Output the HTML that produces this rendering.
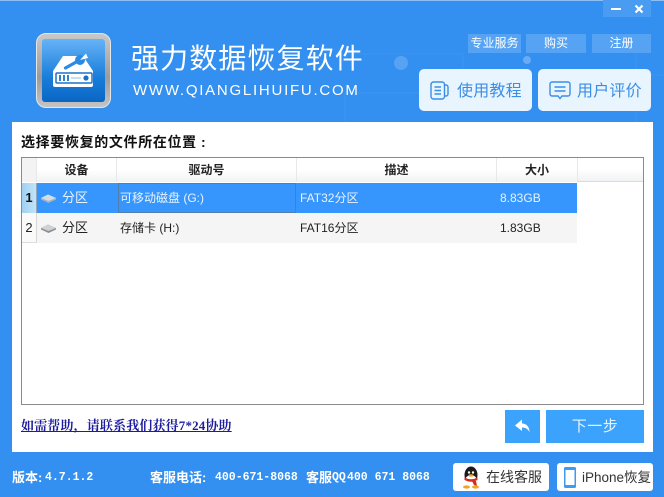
<!DOCTYPE html>
<html lang="zh-CN">
<head>
<meta charset="utf-8">
<title>强力数据恢复软件</title>
<style>
html,body{margin:0;padding:0}
body{width:664px;height:497px;overflow:hidden;position:relative;background:#338ff0;font-family:"Liberation Sans","Noto Sans CJK SC",sans-serif;color:#222}
div,span,a,svg{position:absolute;display:block;box-sizing:border-box;white-space:nowrap}
.top{background:#56a3f4;color:#fff;font-size:12px;line-height:19px;text-align:center;height:19px;top:34px}
.big{background:#e8f4fe;border-radius:5px;top:69px;height:42px;width:113px;color:#3b8ee6;font-size:16px;line-height:42px}
.hd{top:158px;height:24px;font-size:12px;font-weight:700;line-height:25px;text-align:center;color:#222;border-right:1px solid #e8e8e8;background:linear-gradient(#fff 0,#fff 50%,#f1f2f3 100%)}
.cell{font-size:12px;line-height:30px;height:30px}
.w{color:#e8f3ff}
.cj{color:#fff;font-weight:700;font-size:13px;line-height:14px;top:471px}
.num{color:#fff;font-weight:700;font-size:11.5px;line-height:14px;top:471px;font-family:"Liberation Mono",monospace}
.fb{background:#fff;border-radius:3px;top:463px;height:28px;width:96px;font-size:14px;line-height:29px;color:#333}
</style>
</head>
<body>
<div style="left:0;top:0;width:664px;height:1px;background:#8fc0f5"></div>

<!-- background decoration -->
<svg style="left:340px;top:40px" width="324" height="82" viewBox="0 0 324 82" fill="none" stroke="#3c95f1" stroke-width="1">
<path d="M0 14H123M123 14V29M5 53H80M5 53V82M296 14V82M296 35H324"/>
<circle cx="61" cy="23" r="7" fill="#57a2f2" stroke="none"/>
<circle cx="187" cy="20" r="4" fill="#6aacf4" stroke="none"/>
</svg>

<!-- window buttons -->
<div style="left:603px;top:0;width:48px;height:17px;background:#4a9cf2"></div>
<div style="left:611px;top:8px;width:10px;height:2px;background:#fff"></div>
<svg style="left:634px;top:4px" width="10" height="10" viewBox="0 0 10 10"><path d="M1.5 1.5L8.5 8.5M8.5 1.5L1.5 8.5" stroke="#fff" stroke-width="2.2"/></svg>

<!-- logo -->
<div style="left:36px;top:33px;width:75px;height:75px;border-radius:10px;background:linear-gradient(#c9c9c9,#9b9b9b 60%,#c4c4c4);border:1px solid #e6e6e6"></div>
<div style="left:42px;top:39px;width:63px;height:63px;border-radius:3px;background:linear-gradient(#66b3f6,#1a7edb 60%,#0a66c4)"></div>
<svg style="left:50px;top:50px" width="48" height="42" viewBox="0 0 48 42">
<path d="M13 6H33L43 21V35a2 2 0 0 1-2 2H5a2 2 0 0 1-2-2V21Z" fill="#fff"/>
<path d="M15.500 18L28 11" stroke="#2a8be6" stroke-width="3.200" stroke-linecap="round"/>
<circle cx="30" cy="10" r="5" fill="#2a8be6"/>
<path d="M30 10L36 3.500 38 8Z" fill="#fff"/>
<rect x="6" y="23" width="36" height="10" rx="1" fill="#fff" stroke="#1a72c8" stroke-width="1.500"/>
<path d="M10 25v6M14 25v6M18 25v6" stroke="#1a72c8" stroke-width="1.800"/>
<circle cx="36" cy="28" r="2.600" fill="#1a72c8"/>
<path d="M21 28H31" stroke="#8fbde8" stroke-width="1"/>
</svg>

<!-- title -->
<div style="left:131px;top:41px;font-size:28px;line-height:36px;letter-spacing:1.1px;color:#fff">强力数据恢复软件</div>
<div style="left:133px;top:82px;font-size:15px;line-height:18px;letter-spacing:1.75px;color:#fff">WWW.QIANGLIHUIFU.COM</div>

<!-- top links -->
<div class="top" style="left:468px;width:53px">专业服务</div>
<div class="top" style="left:526px;width:60px">购买</div>
<div class="top" style="left:592px;width:59px">注册</div>

<div class="big" style="left:419px"><span style="left:38px;top:2px;letter-spacing:.2px">使用教程</span>
<svg style="left:11px;top:12px" width="19" height="19" viewBox="0 0 19 19" fill="none" stroke="#3b8ee6" stroke-width="1.400"><rect x="1" y="1" width="13.500" height="17" rx="2.500"/><path d="M4.500 6H11M4.500 9.500H11M4.500 13H11M14.500 4h1.500a2 2 0 0 1 2 2v7a2 2 0 0 1-2 2h-1.500"/></svg>
</div>
<div class="big" style="left:538px"><span style="left:39px;top:2px;letter-spacing:.2px">用户评价</span>
<svg style="left:11px;top:12px" width="22" height="19" viewBox="0 0 22 19" fill="none" stroke="#3b8ee6" stroke-width="1.400"><path d="M3 1H19a2 2 0 0 1 2 2V13a2 2 0 0 1-2 2H13L11 17.500 9 15H3a2 2 0 0 1-2-2V3A2 2 0 0 1 3 1Z"/><path d="M5.500 6H16.500M5.500 10H16.500"/></svg>
</div>

<!-- main panel -->
<div style="left:12px;top:122px;width:641px;height:330px;background:#fff"></div>
<div style="left:21px;top:133px;font-size:14px;line-height:18px;font-weight:700;letter-spacing:.65px;color:#111">选择要恢复的文件所在位置</div>
<div style="left:201px;top:133px;font-size:14px;line-height:18px;font-weight:700;color:#111">:</div>

<!-- table -->
<div style="left:21px;top:157px;width:623px;height:248px;border:1px solid #8a8a8a;background:#fff"></div>
<div style="left:22px;top:158px;width:621px;height:24px;background:linear-gradient(#fff 0,#fff 50%,#f1f2f3 100%);border-bottom:1px solid #dcdcdc"></div>
<div class="hd" style="left:22px;width:15px;background:#f3f3f3"></div>
<div class="hd" style="left:37px;width:80px">设备</div>
<div class="hd" style="left:117px;width:180px">驱动号</div>
<div class="hd" style="left:297px;width:200px">描述</div>
<div class="hd" style="left:497px;width:81px">大小</div>

<!-- row 1 -->
<div style="left:37px;top:183px;width:540px;height:30px;background:#3796fd"></div>
<div style="left:22px;top:183px;width:15px;height:30px;background:linear-gradient(90deg,#9fd0f3,#c4e3f8);border-right:1px solid #8fa8bd;font-size:13px;font-weight:700;line-height:30px;text-align:center;color:#111">1</div>
<div style="left:118px;top:183px;width:178px;height:30px;border:1px solid #4f7faf"></div>
<svg style="left:40px;top:193px" width="17" height="11" viewBox="0 0 17 11"><path d="M1 5L8 1.500 16 5V6.500L8.500 10 1 6.500Z" fill="#9fb4c6"/><path d="M1 5L8 1.500 16 5 8.500 8Z" fill="#d5dde4"/></svg>
<div class="cell w" style="left:62px;top:183px;font-size:13px">分区</div>
<div class="cell w" style="left:120px;top:183px">可移动磁盘 (G:)</div>
<div class="cell w" style="left:300px;top:183px">FAT32分区</div>
<div class="cell w" style="left:500px;top:183px">8.83GB</div>

<!-- row 2 -->
<div style="left:37px;top:213px;width:540px;height:30px;background:#f5f5f5"></div>
<div style="left:22px;top:213px;width:15px;height:30px;background:#fafafa;border-right:1px solid #d8d8d8;border-bottom:1px solid #dcdcdc;font-size:13px;line-height:30px;text-align:center;color:#222">2</div>
<svg style="left:40px;top:223px" width="17" height="11" viewBox="0 0 17 11"><path d="M1 5L8 1.500 16 5V6.500L8.500 10 1 6.500Z" fill="#8b8f93"/><path d="M1 5L8 1.500 16 5 8.500 8Z" fill="#cfd2d5"/></svg>
<div class="cell" style="left:62px;top:213px;font-size:13px">分区</div>
<div class="cell" style="left:120px;top:213px">存储卡 (H:)</div>
<div class="cell" style="left:300px;top:213px">FAT16分区</div>
<div class="cell" style="left:500px;top:213px">1.83GB</div>

<!-- help link -->
<div style="left:21px;top:419px;font-size:13px;line-height:14px;font-weight:700;letter-spacing:.15px;color:#1c1c9c;text-decoration:underline;font-family:'Liberation Serif','Noto Serif CJK SC',serif">如需帮助&#xFF0C;请联系我们获得7*24协助</div>

<!-- nav buttons -->
<div style="left:505px;top:410px;width:35px;height:33px;background:#3ba3fb"></div>
<svg style="left:514px;top:419px" width="17" height="14" viewBox="0 0 17 14"><path d="M8 0.500L1 6.500 8 12V8.500C11 8.500 13.500 9.500 15.500 13 15.500 8 12.500 4.500 8 4.500Z" fill="#fff"/></svg>
<div style="left:546px;top:410px;width:98px;height:33px;background:#3ba3fb;color:#e6f4ff;font-size:15px;letter-spacing:.5px;line-height:33px;text-align:center">下一步</div>

<!-- footer -->
<div class="cj" style="left:12px">版本:</div>
<div class="num" style="left:45px">4.7.1.2</div>
<div class="cj" style="left:150px">客服电话:</div>
<div class="num" style="left:215px">400-671-8068</div>
<div class="cj" style="left:306px">客服</div>
<div class="num" style="left:332px">QQ</div>
<div class="num" style="left:347px">400 671 8068</div>

<div class="fb" style="left:453px"><span style="left:33px;top:0">在线客服</span>
<svg style="left:8px;top:3px" width="20" height="23" viewBox="0 0 20 23">
<ellipse cx="10" cy="9" rx="6.500" ry="8.500" fill="#1b1b1b"/>
<ellipse cx="10" cy="15" rx="6" ry="6" fill="#fff"/>
<path d="M3.500 11.500Q10 15 16.500 11.500L16.500 14Q10 17.500 3.500 14Z" fill="#d62b1f"/>
<path d="M11 15h4l1 5-3-1Z" fill="#d62b1f"/>
<ellipse cx="5.500" cy="21" rx="3.500" ry="1.600" fill="#f2a51f"/>
<ellipse cx="14.500" cy="21" rx="3.500" ry="1.600" fill="#f2a51f"/>
<circle cx="8" cy="6.500" r="1.200" fill="#fff"/><circle cx="12" cy="6.500" r="1.200" fill="#fff"/>
<ellipse cx="10" cy="9.500" rx="2.400" ry="1.200" fill="#f2a51f"/>
</svg>
</div>
<div class="fb" style="left:557px"><span style="left:25px;top:0;font-size:13.500px">iPhone恢复</span>
<svg style="left:7px;top:4px" width="12" height="21" viewBox="0 0 12 21"><rect x="0" y="0" width="12" height="21" rx="1.500" fill="#3f9bf0"/><rect x="1.500" y="3" width="9" height="15" fill="#fff"/></svg>
</div>
</body>
</html>
